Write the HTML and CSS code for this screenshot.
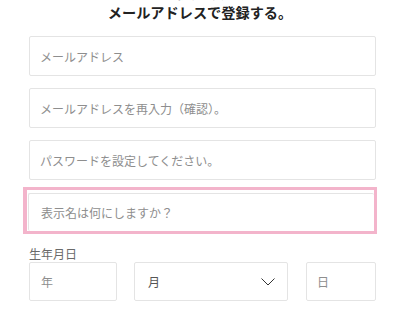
FILE: index.html
```html
<!DOCTYPE html>
<html lang="ja">
  <head>
    <meta charset="UTF-8" />
    <meta name="viewport" content="width=device-width, initial-scale=1.0" />
    <title>メールアドレスで登録</title>
    <link rel="stylesheet" href="styles.css">
  </head>
  <body>
    <div class="container">
      <div class="lead">新規会員</div>
      <h2 class="title">メールアドレスで登録する。</h2>

      <form class="signup-form">
        <input class="field" type="email" placeholder="メールアドレス" />
        <input class="field" type="email" placeholder="メールアドレスを再入力（確認）。" />
        <input class="field field-last" type="password" placeholder="パスワードを設定してください。" />

        <div class="focus-wrap">
          <input class="field field-inner" type="text" placeholder="表示名は何にしますか？" />
        </div>

        <div class="label">生年月日</div>
        <div class="birth-row">
          <input class="date-box year" type="text" placeholder="年" />
          <div class="date-box month">
            <span>月</span>
            <svg width="14" height="8" viewBox="0 0 14 8">
              <path d="M0.5 0.5 L7 7 L13.5 0.5" fill="none" stroke="#333" stroke-width="1" />
            </svg>
          </div>
          <input class="date-box day" type="text" placeholder="日" />
        </div>
      </form>
    </div>
  </body>
</html>
```

FILE: styles.css
```css
body {
  font-family: "Noto Sans CJK JP", "Noto Sans", sans-serif;
  background-color: #fff;
  margin: 0;
  padding: 0;
  color: #222;
}

.container {
  padding: 0 24px 0 29px;
  overflow: hidden;
  height: 316px;
  box-sizing: border-box;
}

.lead {
  margin: -12px -24px 0 -29px;
  height: 12px;
  line-height: 12px;
  font-size: 12px;
  font-weight: bold;
  text-align: center;
}

.title {
  margin: 1px -24px 12px -29px;
  font-size: 14.2px;
  font-weight: bold;
  line-height: 23px;
  height: 23px;
  text-align: center;
}

.signup-form {
  display: flex;
  flex-direction: column;
}

.field {
  display: block;
  width: 100%;
  height: 40px;
  margin: 0 0 12px;
  padding: 0 10px;
  border: 1px solid #e4e4e4;
  border-radius: 2px;
  box-sizing: border-box;
  font-family: inherit;
  font-size: 12px;
  color: #333;
  outline: none;
}

.field-last {
  margin-bottom: 7px;
}

input::placeholder {
  color: #8e8e8e;
}

.focus-wrap {
  margin: 0 -1px 12px -6px;
  height: 47px;
  border: 3px solid #f3b4cb;
  border-left-width: 4px;
  padding: 3px 0 0 1px;
  box-sizing: border-box;
}

.field-inner {
  height: 38px;
  margin: 0;
  padding-left: 12px;
  border-right: none;
  border-bottom: none;
}

.label {
  font-size: 12px;
  line-height: 16px;
  color: #6a6a6a;
}

.birth-row {
  display: flex;
  gap: 17px;
}

.date-box {
  height: 39px;
  border: 1px solid #e4e4e4;
  border-radius: 2px;
  box-sizing: border-box;
  font-family: inherit;
  font-size: 12px;
  color: #555;
  outline: none;
}

.year {
  width: 88px;
  padding: 0 11px;
}

.month {
  width: 156px;
  display: flex;
  align-items: center;
  justify-content: space-between;
  padding: 0 12px 0 13px;
}

.day {
  width: 70px;
  margin-left: 1px;
  padding: 0 10px;
}
```
